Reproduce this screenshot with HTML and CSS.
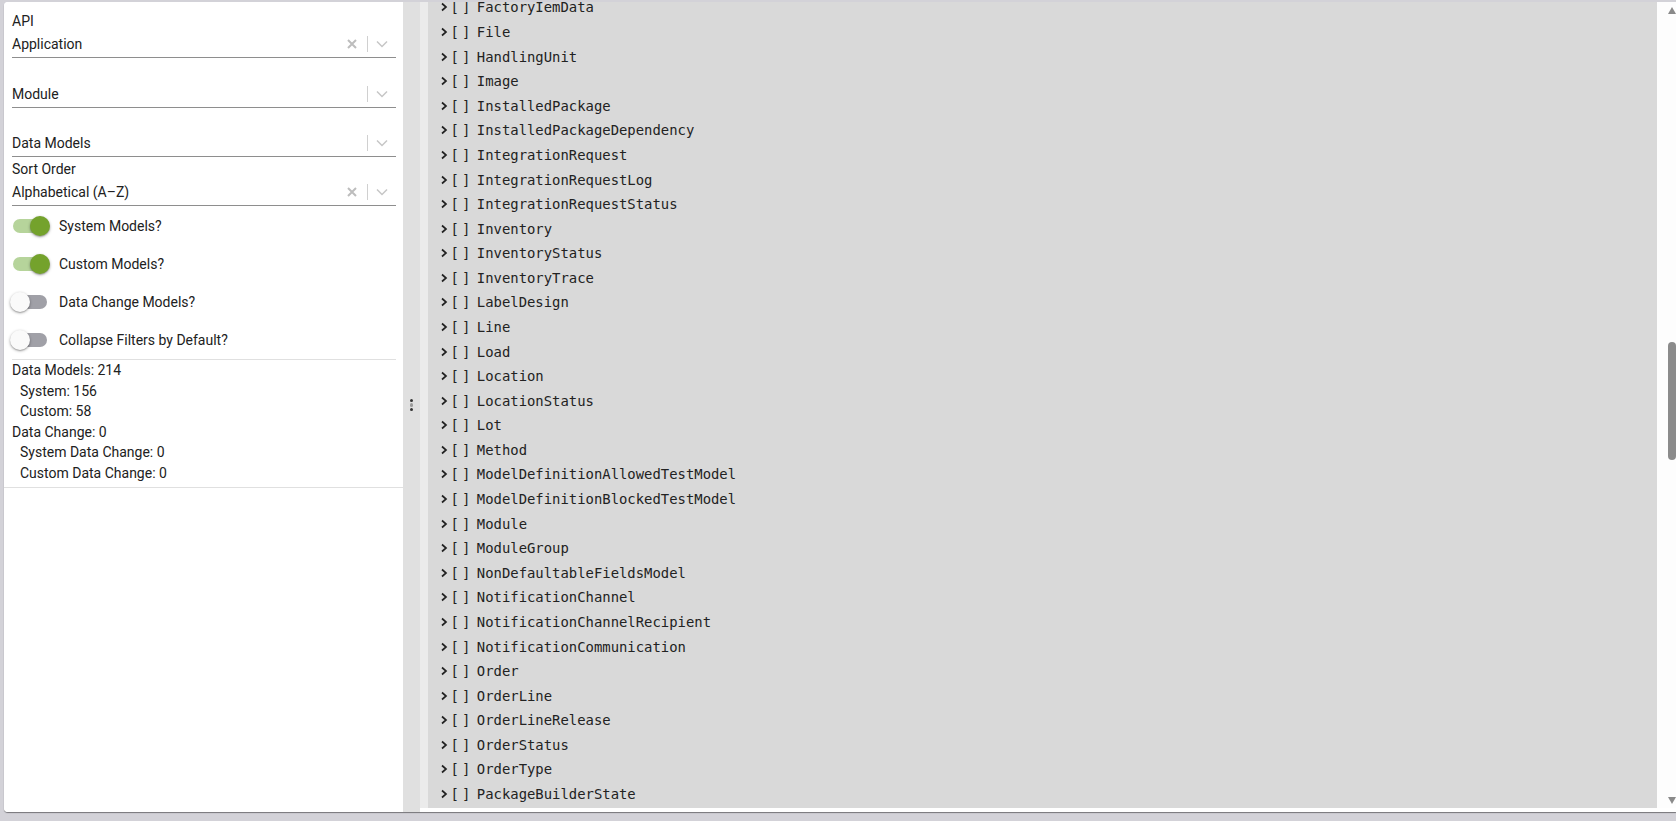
FILE: index.html
```html
<!DOCTYPE html>
<html>
<head>
<meta charset="utf-8">
<link rel="stylesheet" href="styles.css">
</head>
<body>
<div class="card">
  <aside class="left">
    <section class="filters">
      <div class="field">
        <div class="label">API</div>
        <div class="control">
          <span class="value">Application</span>
          <svg class="clear" width="10" height="10" viewBox="0 0 10 10"><path d="M1 1 L9 9 M9 1 L1 9" stroke="#bdbdbd" stroke-width="2" fill="none"/></svg>
          <span class="sep"></span>
          <svg class="chev" width="12" height="8" viewBox="0 0 12 8"><path d="M1 1.5 L6 6.5 L11 1.5" stroke="#c6c6c6" stroke-width="1.5" fill="none"/></svg>
        </div>
      </div>
      <div class="field">
        <div class="label"></div>
        <div class="control">
          <span class="value">Module</span>
          <span class="sep"></span>
          <svg class="chev" width="12" height="8" viewBox="0 0 12 8"><path d="M1 1.5 L6 6.5 L11 1.5" stroke="#c6c6c6" stroke-width="1.5" fill="none"/></svg>
        </div>
      </div>
      <div class="field">
        <div class="label"></div>
        <div class="control">
          <span class="value">Data Models</span>
          <span class="sep"></span>
          <svg class="chev" width="12" height="8" viewBox="0 0 12 8"><path d="M1 1.5 L6 6.5 L11 1.5" stroke="#c6c6c6" stroke-width="1.5" fill="none"/></svg>
        </div>
      </div>
      <div class="field">
        <div class="label">Sort Order</div>
        <div class="control">
          <span class="value">Alphabetical (A–Z)</span>
          <svg class="clear" width="10" height="10" viewBox="0 0 10 10"><path d="M1 1 L9 9 M9 1 L1 9" stroke="#bdbdbd" stroke-width="2" fill="none"/></svg>
          <span class="sep"></span>
          <svg class="chev" width="12" height="8" viewBox="0 0 12 8"><path d="M1 1.5 L6 6.5 L11 1.5" stroke="#c6c6c6" stroke-width="1.5" fill="none"/></svg>
        </div>
      </div>
      <div class="toggles">
        <div class="toggle"><span class="switch on"><span class="track"></span><span class="thumb"></span></span><span class="tlabel">System Models?</span></div>
        <div class="toggle"><span class="switch on"><span class="track"></span><span class="thumb"></span></span><span class="tlabel">Custom Models?</span></div>
        <div class="toggle"><span class="switch"><span class="track"></span><span class="thumb"></span></span><span class="tlabel">Data Change Models?</span></div>
        <div class="toggle"><span class="switch"><span class="track"></span><span class="thumb"></span></span><span class="tlabel">Collapse Filters by Default?</span></div>
      </div>
      <div class="stats">
        <div>Data Models: 214</div>
        <div class="ind">System: 156</div>
        <div class="ind">Custom: 58</div>
        <div>Data Change: 0</div>
        <div class="ind">System Data Change: 0</div>
        <div class="ind">Custom Data Change: 0</div>
      </div>
    </section>
  </aside>
  <div class="splitter">
    <div class="dots"><span class="dot"></span><span class="dot mid"></span><span class="dot"></span></div>
  </div>
  <main class="right">
    <div class="listbox">
      <div class="list">
        <ul class="rows">
          <li><svg class="arrow" width="8" height="10" viewBox="0 0 8 10"><path d="M2 1.5 L6 5 L2 8.5" stroke="#222" stroke-width="1.7" fill="none"/></svg><span class="br">[]</span><span class="name">FactoryIemData</span></li>
          <li><svg class="arrow" width="8" height="10" viewBox="0 0 8 10"><path d="M2 1.5 L6 5 L2 8.5" stroke="#222" stroke-width="1.7" fill="none"/></svg><span class="br">[]</span><span class="name">File</span></li>
          <li><svg class="arrow" width="8" height="10" viewBox="0 0 8 10"><path d="M2 1.5 L6 5 L2 8.5" stroke="#222" stroke-width="1.7" fill="none"/></svg><span class="br">[]</span><span class="name">HandlingUnit</span></li>
          <li><svg class="arrow" width="8" height="10" viewBox="0 0 8 10"><path d="M2 1.5 L6 5 L2 8.5" stroke="#222" stroke-width="1.7" fill="none"/></svg><span class="br">[]</span><span class="name">Image</span></li>
          <li><svg class="arrow" width="8" height="10" viewBox="0 0 8 10"><path d="M2 1.5 L6 5 L2 8.5" stroke="#222" stroke-width="1.7" fill="none"/></svg><span class="br">[]</span><span class="name">InstalledPackage</span></li>
          <li><svg class="arrow" width="8" height="10" viewBox="0 0 8 10"><path d="M2 1.5 L6 5 L2 8.5" stroke="#222" stroke-width="1.7" fill="none"/></svg><span class="br">[]</span><span class="name">InstalledPackageDependency</span></li>
          <li><svg class="arrow" width="8" height="10" viewBox="0 0 8 10"><path d="M2 1.5 L6 5 L2 8.5" stroke="#222" stroke-width="1.7" fill="none"/></svg><span class="br">[]</span><span class="name">IntegrationRequest</span></li>
          <li><svg class="arrow" width="8" height="10" viewBox="0 0 8 10"><path d="M2 1.5 L6 5 L2 8.5" stroke="#222" stroke-width="1.7" fill="none"/></svg><span class="br">[]</span><span class="name">IntegrationRequestLog</span></li>
          <li><svg class="arrow" width="8" height="10" viewBox="0 0 8 10"><path d="M2 1.5 L6 5 L2 8.5" stroke="#222" stroke-width="1.7" fill="none"/></svg><span class="br">[]</span><span class="name">IntegrationRequestStatus</span></li>
          <li><svg class="arrow" width="8" height="10" viewBox="0 0 8 10"><path d="M2 1.5 L6 5 L2 8.5" stroke="#222" stroke-width="1.7" fill="none"/></svg><span class="br">[]</span><span class="name">Inventory</span></li>
          <li><svg class="arrow" width="8" height="10" viewBox="0 0 8 10"><path d="M2 1.5 L6 5 L2 8.5" stroke="#222" stroke-width="1.7" fill="none"/></svg><span class="br">[]</span><span class="name">InventoryStatus</span></li>
          <li><svg class="arrow" width="8" height="10" viewBox="0 0 8 10"><path d="M2 1.5 L6 5 L2 8.5" stroke="#222" stroke-width="1.7" fill="none"/></svg><span class="br">[]</span><span class="name">InventoryTrace</span></li>
          <li><svg class="arrow" width="8" height="10" viewBox="0 0 8 10"><path d="M2 1.5 L6 5 L2 8.5" stroke="#222" stroke-width="1.7" fill="none"/></svg><span class="br">[]</span><span class="name">LabelDesign</span></li>
          <li><svg class="arrow" width="8" height="10" viewBox="0 0 8 10"><path d="M2 1.5 L6 5 L2 8.5" stroke="#222" stroke-width="1.7" fill="none"/></svg><span class="br">[]</span><span class="name">Line</span></li>
          <li><svg class="arrow" width="8" height="10" viewBox="0 0 8 10"><path d="M2 1.5 L6 5 L2 8.5" stroke="#222" stroke-width="1.7" fill="none"/></svg><span class="br">[]</span><span class="name">Load</span></li>
          <li><svg class="arrow" width="8" height="10" viewBox="0 0 8 10"><path d="M2 1.5 L6 5 L2 8.5" stroke="#222" stroke-width="1.7" fill="none"/></svg><span class="br">[]</span><span class="name">Location</span></li>
          <li><svg class="arrow" width="8" height="10" viewBox="0 0 8 10"><path d="M2 1.5 L6 5 L2 8.5" stroke="#222" stroke-width="1.7" fill="none"/></svg><span class="br">[]</span><span class="name">LocationStatus</span></li>
          <li><svg class="arrow" width="8" height="10" viewBox="0 0 8 10"><path d="M2 1.5 L6 5 L2 8.5" stroke="#222" stroke-width="1.7" fill="none"/></svg><span class="br">[]</span><span class="name">Lot</span></li>
          <li><svg class="arrow" width="8" height="10" viewBox="0 0 8 10"><path d="M2 1.5 L6 5 L2 8.5" stroke="#222" stroke-width="1.7" fill="none"/></svg><span class="br">[]</span><span class="name">Method</span></li>
          <li><svg class="arrow" width="8" height="10" viewBox="0 0 8 10"><path d="M2 1.5 L6 5 L2 8.5" stroke="#222" stroke-width="1.7" fill="none"/></svg><span class="br">[]</span><span class="name">ModelDefinitionAllowedTestModel</span></li>
          <li><svg class="arrow" width="8" height="10" viewBox="0 0 8 10"><path d="M2 1.5 L6 5 L2 8.5" stroke="#222" stroke-width="1.7" fill="none"/></svg><span class="br">[]</span><span class="name">ModelDefinitionBlockedTestModel</span></li>
          <li><svg class="arrow" width="8" height="10" viewBox="0 0 8 10"><path d="M2 1.5 L6 5 L2 8.5" stroke="#222" stroke-width="1.7" fill="none"/></svg><span class="br">[]</span><span class="name">Module</span></li>
          <li><svg class="arrow" width="8" height="10" viewBox="0 0 8 10"><path d="M2 1.5 L6 5 L2 8.5" stroke="#222" stroke-width="1.7" fill="none"/></svg><span class="br">[]</span><span class="name">ModuleGroup</span></li>
          <li><svg class="arrow" width="8" height="10" viewBox="0 0 8 10"><path d="M2 1.5 L6 5 L2 8.5" stroke="#222" stroke-width="1.7" fill="none"/></svg><span class="br">[]</span><span class="name">NonDefaultableFieldsModel</span></li>
          <li><svg class="arrow" width="8" height="10" viewBox="0 0 8 10"><path d="M2 1.5 L6 5 L2 8.5" stroke="#222" stroke-width="1.7" fill="none"/></svg><span class="br">[]</span><span class="name">NotificationChannel</span></li>
          <li><svg class="arrow" width="8" height="10" viewBox="0 0 8 10"><path d="M2 1.5 L6 5 L2 8.5" stroke="#222" stroke-width="1.7" fill="none"/></svg><span class="br">[]</span><span class="name">NotificationChannelRecipient</span></li>
          <li><svg class="arrow" width="8" height="10" viewBox="0 0 8 10"><path d="M2 1.5 L6 5 L2 8.5" stroke="#222" stroke-width="1.7" fill="none"/></svg><span class="br">[]</span><span class="name">NotificationCommunication</span></li>
          <li><svg class="arrow" width="8" height="10" viewBox="0 0 8 10"><path d="M2 1.5 L6 5 L2 8.5" stroke="#222" stroke-width="1.7" fill="none"/></svg><span class="br">[]</span><span class="name">Order</span></li>
          <li><svg class="arrow" width="8" height="10" viewBox="0 0 8 10"><path d="M2 1.5 L6 5 L2 8.5" stroke="#222" stroke-width="1.7" fill="none"/></svg><span class="br">[]</span><span class="name">OrderLine</span></li>
          <li><svg class="arrow" width="8" height="10" viewBox="0 0 8 10"><path d="M2 1.5 L6 5 L2 8.5" stroke="#222" stroke-width="1.7" fill="none"/></svg><span class="br">[]</span><span class="name">OrderLineRelease</span></li>
          <li><svg class="arrow" width="8" height="10" viewBox="0 0 8 10"><path d="M2 1.5 L6 5 L2 8.5" stroke="#222" stroke-width="1.7" fill="none"/></svg><span class="br">[]</span><span class="name">OrderStatus</span></li>
          <li><svg class="arrow" width="8" height="10" viewBox="0 0 8 10"><path d="M2 1.5 L6 5 L2 8.5" stroke="#222" stroke-width="1.7" fill="none"/></svg><span class="br">[]</span><span class="name">OrderType</span></li>
          <li><svg class="arrow" width="8" height="10" viewBox="0 0 8 10"><path d="M2 1.5 L6 5 L2 8.5" stroke="#222" stroke-width="1.7" fill="none"/></svg><span class="br">[]</span><span class="name">PackageBuilderState</span></li>
        </ul>
      </div>
      <div class="scrollbar">
        <svg class="sarrow" width="8" height="7" viewBox="0 0 8 7"><path d="M4 0 L8 7 L0 7 Z" fill="#8a8a8a"/></svg>
        <div class="strack"><div class="thumb-s" style="margin-top: 328px; height: 118px;"></div></div>
        <svg class="sarrow" width="8" height="7" viewBox="0 0 8 7"><path d="M0 0 L8 0 L4 7 Z" fill="#8a8a8a"/></svg>
      </div>
    </div>
  </main>
</div>
</body>
</html>
```

FILE: styles.css
```css
* { box-sizing: border-box; }
html, body { margin: 0; padding: 0; }
body {
  background: #d3d2d8;
  height: 821px;
  overflow: hidden;
  font-family: Roboto, "Liberation Sans", Arial, sans-serif;
  font-size: 14px;
  color: #212121;
}
.card {
  margin: 2px 0 9px 4px;
  height: 810px;
  display: flex;
  background: #fff;
  border-radius: 4px 0 0 4px;
  box-shadow: 0 1px 1px rgba(0,0,0,0.45);
  overflow: hidden;
}
.left {
  width: 399px;
  flex: none;
  background: #fff;
}
.filters {
  padding: 7px 7px 4px 8px;
  border-bottom: 1px solid #e0e0e0;
}
.field { padding-top: 2.8px; }
.label { height: 19.5px; line-height: 19.5px; }
.control {
  height: 27px;
  border-bottom: 1px solid #8e8e8e;
  display: flex;
  align-items: center;
}
.value { flex: 1; line-height: 20px; }
.clear { flex: none; margin-right: 9.7px; }
.sep { width: 1px; height: 16px; background: #d0d0d0; flex: none; }
.chev { flex: none; margin-left: 8px; margin-right: 8px; }
.toggles { margin-top: 1px; }
.toggle { height: 38px; display: flex; align-items: center; }
.switch {
  position: relative;
  width: 58px;
  height: 38px;
  margin-left: -11px;
  flex: none;
}
.track {
  position: absolute;
  left: 12px; top: 12px;
  width: 34px; height: 14px;
  border-radius: 7px;
  background: #a0a0a7;
}
.thumb {
  position: absolute;
  left: 9px; top: 9px;
  width: 20px; height: 20px;
  border-radius: 50%;
  background: #fafafa;
  box-shadow: 0 1px 3px rgba(0,0,0,0.35), 0 1px 1px rgba(0,0,0,0.14);
}
.switch.on .track { background: #b6d49b; }
.switch.on .thumb { left: 29px; background: #74a22c; }
.stats {
  border-top: 1px solid #e0e0e0;
}
.stats div { line-height: 20.5px; height: 20.5px; }
.stats .ind { padding-left: 8px; }
.splitter {
  width: 17px;
  flex: none;
  background: #e0e0e0;
  display: flex;
  align-items: center;
  justify-content: center;
}
.dots {
  display: flex;
  flex-direction: column;
  gap: 1px;
  margin-bottom: 4px;
}
.dot { width: 3.4px; height: 3.4px; border-radius: 50%; background: #333; display: block; }
.dot.mid { background: #9a9a9a; }
.right {
  flex: 1;
  background: #fff;
  display: flex;
  flex-direction: column;
  padding-bottom: 4px;
}
.listbox {
  flex: 1;
  display: flex;
  border-left: 8px solid #ebebeb;
  min-height: 0;
}
.list {
  flex: 1;
  background: #d9d9d9;
  overflow: hidden;
}
.rows {
  list-style: none;
  margin: -6.8px 0 0 0;
  padding: 0;
  font-family: "DejaVu Sans Mono", "Liberation Mono", monospace;
  font-size: 13.9px;
  color: #222;
}
.rows li {
  height: 24.58px;
  display: flex;
  align-items: center;
  padding-left: 12px;
  white-space: nowrap;
}
.arrow { flex: none; }
.br { margin-left: 2.5px; letter-spacing: 3.2px; }
.name { margin-left: 3.2px; }
.scrollbar {
  width: 19px;
  flex: none;
  background: #fdfdfd;
  display: flex;
  flex-direction: column;
  align-items: flex-end;
  padding: 5px 0 4px 0;
}
.sarrow { flex: none; }
.strack { flex: 1; width: 8px; }
.thumb-s { width: 8px; background: #8b8b8b; border-radius: 4px; }
```
